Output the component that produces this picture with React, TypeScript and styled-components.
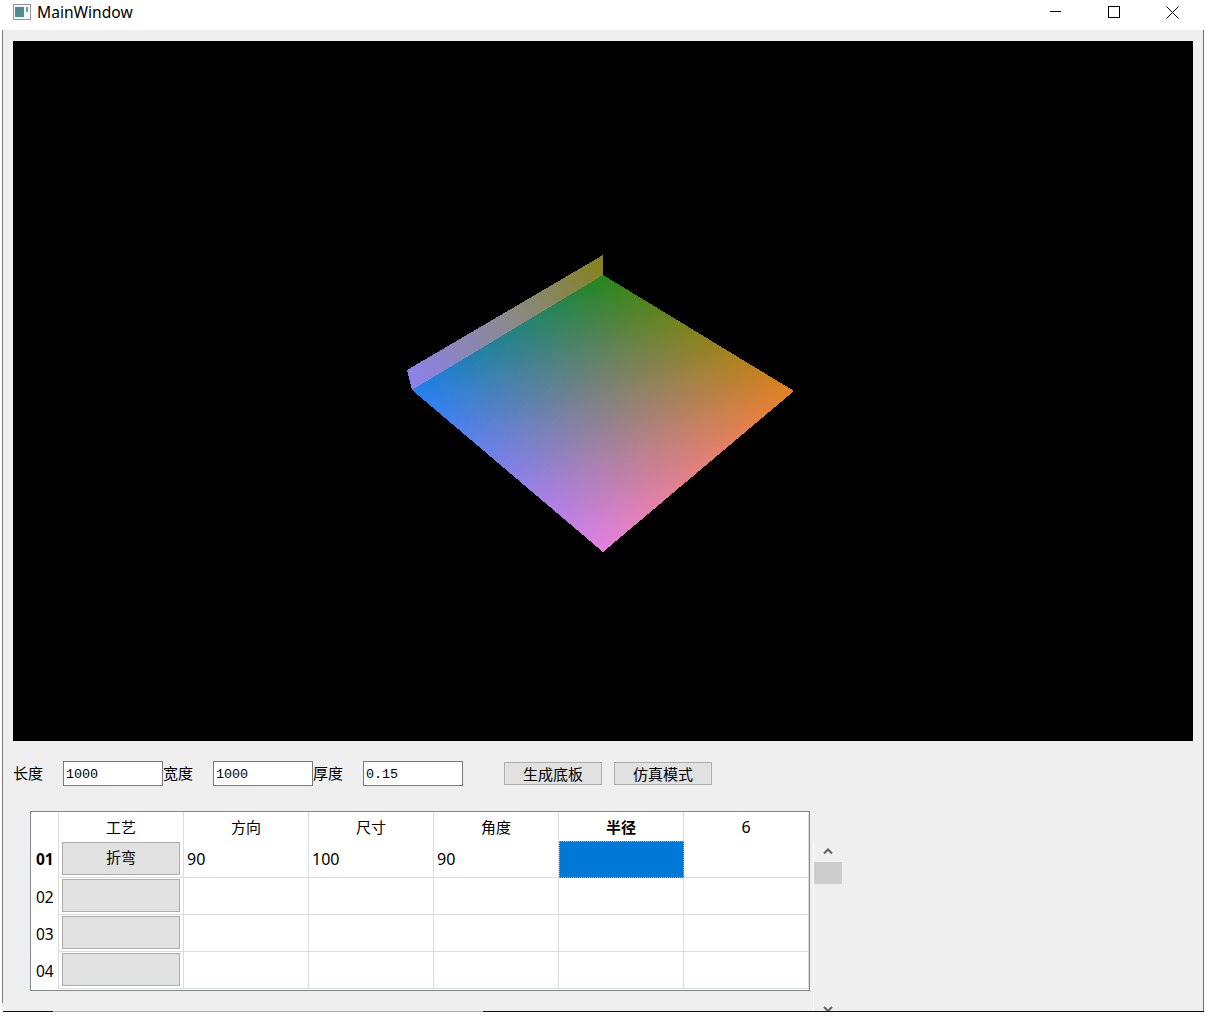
import styled, { createGlobalStyle } from "styled-components";

const GlobalStyle = createGlobalStyle`
  html, body {
    margin: 0;
    padding: 0;
    background: #fff;
  }
`;

const cjk = `"Noto Sans", "Noto Sans CJK SC", sans-serif`;

const Page = styled.div`
  width: 1205px;
  height: 1018px;
  overflow: hidden;
  font-family: ${cjk};
  font-size: 15px;
  color: #000;
`;

const TitleBar = styled.div`
  height: 30px;
  display: flex;
  align-items: center;
  padding: 0 3px 0 13px;
  background: #fff;
`;

const TitleIcon = styled.svg`
  display: block;
  margin-top: -6px;
`;

const AppTitle = styled.span`
  margin-left: 6px;
  flex: 1;
  font-size: 15.6px;
  margin-top: -6px;
`;

const WinButton = styled.div`
  width: 59px;
  height: 24px;
  margin-top: -6px;
  display: flex;
  align-items: center;
  justify-content: center;
`;

const Body = styled.div`
  margin-left: 2px;
  width: 1202px;
  height: 981px;
  box-sizing: border-box;
  padding: 11px 0 0 11px;
  overflow: hidden;
  background: linear-gradient(#7c7c7c, #7c7c7c) left top / 1px 973px no-repeat, #efefef;
  border-right: 1px solid #707070;
`;

const BottomEdge = styled.div`
  margin-left: 3px;
  width: 1201px;
  height: 1px;
  background: linear-gradient(90deg, #111 0 50px, #b0b0b0 50px 480px, #111 480px);
`;

const Viewport = styled.div`
  width: 1180px;
  height: 700px;
  background: #000;
`;

const Scene = styled.svg`
  display: block;
  shape-rendering: crispEdges;
`;

const FormRow = styled.div`
  height: 25px;
  margin: 20px 0 25px;
  display: flex;
  align-items: center;
`;

const FieldLabel = styled.label`
  width: 50px;
  box-sizing: border-box;
  line-height: 25px;
`;

const Input = styled.input`
  width: 100px;
  height: 25px;
  box-sizing: border-box;
  padding: 1px 2px 0;
  border: 1px solid #7a7a7a;
  border-radius: 0;
  outline: none;
  background: #fff;
  font-family: "Liberation Mono", monospace;
  font-size: 13.4px;
  color: #000;
`;

const ActionButton = styled.button<{ $gap: number }>`
  width: 98px;
  height: 23px;
  margin-left: ${(p) => p.$gap}px;
  padding: 0 0 3px;
  box-sizing: border-box;
  border: 1px solid #adadad;
  border-radius: 0;
  background: #e1e1e1;
  font-family: ${cjk};
  font-size: 15px;
  color: #000;
`;

const TableRow = styled.div`
  display: flex;
  margin-left: 17px;
`;

const Table = styled.div`
  width: 780px;
  height: 180px;
  box-sizing: border-box;
  border: 1px solid #828790;
  background: #fff;
  display: grid;
  grid-template-columns: 28px repeat(6, 125px);
  grid-template-rows: 29px repeat(4, 37px);
`;

const Corner = styled.div`
  border-right: 1px solid #dcdcdc;
`;

const HeaderCell = styled.div<{ $active?: boolean; $digit?: boolean }>`
  border-right: 1px solid #dcdcdc;
  display: flex;
  align-items: center;
  justify-content: center;
  font-size: ${(p) => (p.$digit ? 16 : 15)}px;
  font-weight: ${(p) => (p.$active ? 700 : 400)};
`;

const RowHeader = styled.div<{ $active?: boolean }>`
  display: flex;
  align-items: center;
  padding: ${(p) => (p.$active ? "0 0 1px 5px" : "1px 0 0 5px")};
  border-right: 1px solid #dcdcdc;
  font-size: 15.5px;
  font-weight: ${(p) => (p.$active ? 700 : 400)};
`;

const ButtonCell = styled.div`
  padding: 1px 3px 0;
  border-right: 1px solid #dcdcdc;
  border-bottom: 1px solid #dcdcdc;
`;

const ProcessButton = styled.button`
  display: block;
  width: 118px;
  height: 33px;
  padding: 0 0 5px;
  box-sizing: border-box;
  border: 1px solid #adadad;
  border-radius: 0;
  background: #e1e1e1;
  font-family: ${cjk};
  font-size: 15px;
  color: #000;
`;

const Cell = styled.div`
  border-right: 1px solid #dcdcdc;
  border-bottom: 1px solid #dcdcdc;
  padding: 0 0 0 3px;
  display: flex;
  align-items: center;
  font-size: 16px;
  background: #fff;
`;

const SelectedCell = styled.div`
  border: 1px dotted #ff9a2e;
  background: #0078d7;
`;

const ScrollBar = styled.div`
  width: 29px;
  height: 170px;
  box-sizing: border-box;
  margin: 30px 0 0 3px;
  overflow: hidden;
  border-left: 1px solid #fafafa;
  display: flex;
  flex-direction: column;
  align-items: center;
`;

const ScrollArrow = styled.svg<{ $top?: number }>`
  display: block;
  flex-shrink: 0;
  margin-top: ${(p) => p.$top ?? 0}px;
`;

const ScrollThumb = styled.div`
  flex-shrink: 0;
  width: 28px;
  height: 22px;
  margin-top: 3px;
  background: #cdcdcd;
`;

type Rgb = [number, number, number];

const left: [number, number] = [412, 390];
const top: [number, number] = [603, 275];
const right: [number, number] = [794, 391];
const bottom: [number, number] = [603, 552];

const cLeft: Rgb = [31, 128, 240];
const cTop: Rgb = [38, 134, 28];
const cRight: Rgb = [228, 128, 32];
const cBottom: Rgb = [228, 128, 224];

// bilinear patch over the plate, u runs left->top, v runs left->bottom
function mix(a: number[], b: number[], c: number[], d: number[], u: number, v: number) {
  return a.map((_, i) => a[i] * (1 - u) * (1 - v) + b[i] * u * (1 - v) + c[i] * u * v + d[i] * (1 - u) * v);
}

const STEPS = 48;
const plate: { points: string; fill: string }[] = [];
for (let i = 0; i < STEPS; i++) {
  for (let j = 0; j < STEPS; j++) {
    const pt = (u: number, v: number) => mix(left, top, right, bottom, u / STEPS, v / STEPS).join(",");
    const c = mix(cLeft, cTop, cRight, cBottom, (i + 0.5) / STEPS, (j + 0.5) / STEPS).map(Math.round);
    plate.push({
      points: [pt(i, j), pt(i + 1, j), pt(i + 1, j + 1), pt(i, j + 1)].join(" "),
      fill: `rgb(${c[0]},${c[1]},${c[2]})`,
    });
  }
}

const rows = ["01", "02", "03", "04"];
const columns = ["工艺", "方向", "尺寸", "角度", "半径", "6"];

function App() {
  return (
    <Page>
      <GlobalStyle />
      <TitleBar>
        <TitleIcon width="18" height="16" viewBox="0 0 18 16">
          <rect x="0.5" y="0.5" width="17" height="15" fill="#f4f6f8" stroke="#8f9599" />
          <rect x="2" y="3" width="9" height="10" fill="#4d8f8a" />
          <rect x="2" y="3" width="5" height="5" fill="#4f86a8" />
          <rect x="13" y="3" width="2" height="5" fill="#6f9f9a" />
        </TitleIcon>
        <AppTitle>MainWindow</AppTitle>
        <WinButton>
          <svg width="12" height="12" viewBox="0 0 12 12">
            <path d="M1 5.5H13" stroke="#000" fill="none" />
          </svg>
        </WinButton>
        <WinButton>
          <svg width="12" height="12" viewBox="0 0 12 12">
            <rect x="0.5" y="0.5" width="11" height="11" stroke="#000" fill="none" />
          </svg>
        </WinButton>
        <WinButton>
          <svg width="13" height="13" viewBox="0 0 13 13">
            <path d="M0.5 0.5L12.5 12.5M12.5 0.5L0.5 12.5" stroke="#000" fill="none" />
          </svg>
        </WinButton>
      </TitleBar>
      <Body>
        <Viewport>
          <Scene width="1180" height="700" viewBox="13 41 1180 700">
            <defs>
              <linearGradient id="fold" gradientUnits="userSpaceOnUse" x1="603" y1="265" x2="410" y2="380">
                <stop offset="0" stopColor="#85821f" />
                <stop offset="0.5" stopColor="#8a8a8f" />
                <stop offset="1" stopColor="#8d80ea" />
              </linearGradient>
            </defs>
            <polygon points="603,255 603,277 414,391 412,390 407,370" fill="url(#fold)" />
            {plate.map((q, i) => (
              <polygon key={i} points={q.points} fill={q.fill} />
            ))}
          </Scene>
        </Viewport>
        <FormRow>
          <FieldLabel>长度</FieldLabel>
          <Input defaultValue="1000" />
          <FieldLabel>宽度</FieldLabel>
          <Input defaultValue="1000" />
          <FieldLabel>厚度</FieldLabel>
          <Input defaultValue="0.15" />
          <ActionButton $gap={41}>生成底板</ActionButton>
          <ActionButton $gap={12}>仿真模式</ActionButton>
        </FormRow>
        <TableRow>
          <Table>
            <Corner />
            {columns.map((c) => (
              <HeaderCell key={c} $active={c === "半径"} $digit={c === "6"}>
                {c}
              </HeaderCell>
            ))}
            {rows.map((r, i) => (
              <Row key={r} label={r} first={i === 0} />
            ))}
          </Table>
          <ScrollBar>
            <ScrollArrow $top={2} width="12" height="16" viewBox="0 0 12 16">
              <path d="M2 10.5L6 6.5L10 10.5" stroke="#606060" strokeWidth="2" fill="none" />
            </ScrollArrow>
            <ScrollThumb />
            <ScrollArrow $top={120} width="12" height="16" viewBox="0 0 12 16">
              <path d="M2 3L6 7L10 3" stroke="#606060" strokeWidth="2" fill="none" />
            </ScrollArrow>
          </ScrollBar>
        </TableRow>
      </Body>
      <BottomEdge />
    </Page>
  );
}

function Row({ label, first }: { label: string; first: boolean }) {
  return (
    <>
      <RowHeader $active={first}>{label}</RowHeader>
      <ButtonCell>
        <ProcessButton>{first ? "折弯" : ""}</ProcessButton>
      </ButtonCell>
      <Cell>{first ? "90" : ""}</Cell>
      <Cell>{first ? "100" : ""}</Cell>
      <Cell>{first ? "90" : ""}</Cell>
      {first ? <SelectedCell /> : <Cell />}
      <Cell />
    </>
  );
}

export default App;
